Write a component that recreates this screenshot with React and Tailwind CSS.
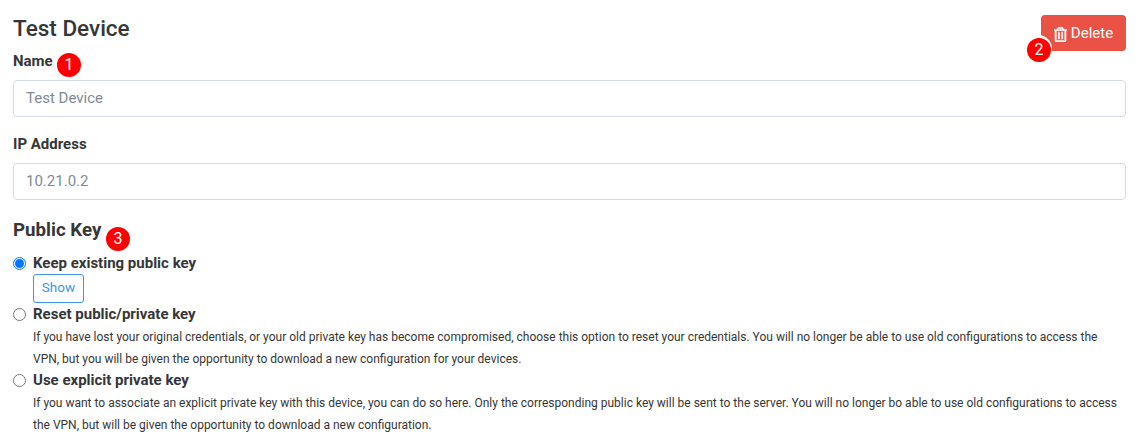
import React from "react";

function Badge({ n, className }) {
  return (
    <span className={"absolute flex h-6 w-6 items-center justify-center rounded-full bg-[#ff0000] text-[16px] leading-none text-white " + className}>
      {n}
    </span>
  );
}

function Trash() {
  return (
    <svg width="13" height="15" viewBox="0 0 448 512" fill="currentColor" stroke="currentColor" strokeWidth="14" className="mt-[2px] mr-[4px]">
      <path d="M268 416h24a12 12 0 0 0 12-12V188a12 12 0 0 0-12-12h-24a12 12 0 0 0-12 12v216a12 12 0 0 0 12 12zM432 80h-82.41l-34-56.7A48 48 0 0 0 274.41 0H173.59a48 48 0 0 0-41.16 23.3L98.41 80H16A16 16 0 0 0 0 96v16a16 16 0 0 0 16 16h16v336a48 48 0 0 0 48 48h288a48 48 0 0 0 48-48V128h16a16 16 0 0 0 16-16V96a16 16 0 0 0-16-16zM171.84 50.91A6 6 0 0 1 177 48h94a6 6 0 0 1 5.15 2.91L293.61 80H154.39zM368 464H80V128h288zm-212-48h24a12 12 0 0 0 12-12V188a12 12 0 0 0-12-12h-24a12 12 0 0 0-12 12v216a12 12 0 0 0 12 12z" />
    </svg>
  );
}

function Radio({ checked }) {
  return (
    <span className={"flex h-[13px] w-[13px] shrink-0 items-center justify-center rounded-full border bg-white " + (checked ? "border-[#0075ff]" : "border-[#767676]")}>
      {checked && <span className="h-[9px] w-[9px] rounded-full bg-[#0075ff]" />}
    </span>
  );
}

function Option({ checked, label }) {
  return (
    <div className="flex h-[21px] items-center gap-[7px]">
      <Radio checked={checked} />
      <span className="text-[15px] leading-[21px] font-bold text-[#363636]">{label}</span>
    </div>
  );
}

function Field({ label, value }) {
  return (
    <div>
      <div className="pt-[1px] text-[15px] leading-[21px] font-bold text-[#363636]">{label}</div>
      <div className="mt-[8px] flex h-[37px] items-center rounded-[4px] border border-[#d5dbe4] bg-white pr-[12px] pl-[12px] text-[15px] text-[#7f8a93]">
        {value}
      </div>
    </div>
  );
}

export default function App() {
  return (
    <div className="relative h-[446px] w-[1140px] overflow-hidden bg-white pr-[14px] pl-[13px] font-['Roboto',sans-serif] text-[#363636]">
      <div className="flex items-start justify-between pt-[15px]">
        <h1 className="text-[22.5px] leading-[27px] font-medium text-[#363636]">Test Device</h1>
        <div className="relative">
          <button className="flex h-[36px] w-[85px] items-center justify-center rounded-[4px] bg-[#e95244] text-[15px] text-white">
            <Trash />
            Delete
          </button>
          <span className="absolute top-[20px] left-[-17px] h-[28px] w-[28px] rounded-full bg-white" />
          <Badge n="2" className="top-[23px] left-[-14px]" />
        </div>
      </div>

      <div className="relative mt-[-1px]">
        <Field label="Name" value="Test Device" />
        <Badge n="1" className="top-[3px] left-[44px]" />
      </div>
      <div className="mt-[16px]">
        <Field label="IP Address" value="10.21.0.2" />
      </div>

      <div className="relative mt-[19px]">
        <h2 className="text-[18.7px] leading-[22px] font-bold text-[#363636]">Public Key</h2>
        <Badge n="3" className="top-[8px] left-[93px]" />
      </div>

      <div className="mt-[12px]">
        <Option checked label="Keep existing public key" />
        <button className="mb-[1px] ml-[20px] block h-[29px] w-[51px] rounded-[3px] border border-[#3e97e0] bg-white pb-[2px] text-[13.5px] text-[#3e97e0]">
          Show
        </button>
        <Option label="Reset public/private key" />
        <p className="mt-[1px] ml-[20px] text-[12px] leading-[22px] text-[#363636]">
          If you have lost your original credentials, or your old private key has become compromised, choose this option to reset your credentials. You will no longer be able to use old configurations to access the<br />VPN, but you will be given the opportunity to download a new configuration for your devices.
        </p>
        <Option label="Use explicit private key" />
        <p className="mt-[1px] ml-[20px] text-[12px] leading-[22px] text-[#363636]">
          If you want to associate an explicit private key with this device, you can do so here. Only the corresponding public key will be sent to the server. You will no longer bo able to use old configurations to access the VPN, but will be given the opportunity to download a new configuration.
        </p>
      </div>
    </div>
  );
}
